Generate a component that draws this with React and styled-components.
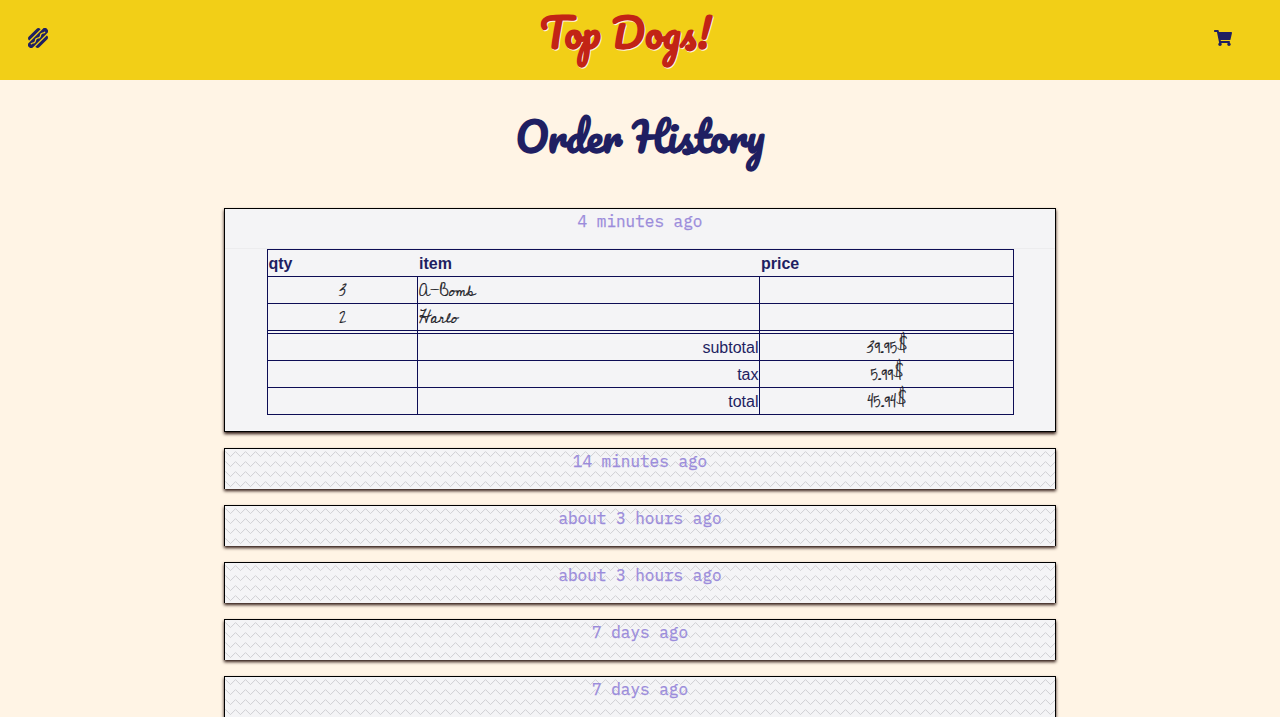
import React from "react";
import styled, { createGlobalStyle } from "styled-components";
import { FaHotdog, FaShoppingCart } from "react-icons/fa";

const zig = `url("data:image/svg+xml,%3Csvg xmlns='http://www.w3.org/2000/svg' width='10' height='10'%3E%3Cpath fill='none' stroke='%23c9c9cc' stroke-width='.85' d='M-4.5 7.6 .5 2.6l5 5 5-5 5 5'/%3E%3C/svg%3E")`;
const script = `"Pacifico", "Lato", cursive`;
const hand = `"Cedarville Cursive", "Lato", cursive`;
const mono = `"IBM Plex Mono", "Liberation Mono", monospace`;

const Global = createGlobalStyle`
  * { box-sizing: border-box; }
  body { margin: 0; background: #fff4e5; color: #1f1f62; overflow: hidden;
    font-family: "Liberation Sans", Arial, sans-serif; font-size: 16px; }
`;
const Header = styled.header`
  height: 80px; background: #f2cf17; display: flex; align-items: center;
  justify-content: space-between; padding: 0 48px 4px 28px;
  svg { display: block; }
`;
const Logo = styled.div`
  font: bold 40px/70px ${script}; color: #c22415; height: 70px; margin: 0 11px 12px 0;
  white-space: nowrap; text-shadow: 1px 1px 0 #fff4e4;
`;
const Title = styled.h1`
  font: bold 40px/70px ${script}; margin: 21px 0 37px; height: 70px; text-align: center;
`;
const List = styled.main`
  width: 832px; margin: 0 auto; display: flex; flex-direction: column; gap: 16px;
`;
const Card = styled.article`
  border: 1px solid #000; border-bottom-width: ${(p) => (p.$open ? 1 : 0)}px;
  height: ${(p) => (p.$open ? 224 : 41)}px; flex: none; background: #f4f4f6;
  box-shadow: 0 2px 3px #2d1712;
`;
const When = styled.div`
  height: 40px; text-align: center; color: #9b8cdb; font: 16px/25px ${mono};
  -webkit-text-stroke: 0.25px #9b8cdb;
  background: ${(p) => (p.$open ? "none" : zig)};
  border-bottom: ${(p) => (p.$open ? "1px solid #ececee" : "0")};
`;
const Table = styled.table`
  width: 747px; margin: 0 auto; border-collapse: collapse; table-layout: fixed; color: #1f1f62;
`;
const Col = styled.col`
  width: ${(p) => p.$w}px;
`;
const Th = styled.th`
  text-align: left; padding: 2px 1px 0 ${(p) => (p.$first ? 1 : 2)}px; height: 27px; line-height: 20px;
  border: 0 solid #0d0d55; border-top-width: 1px;
  border-left-width: ${(p) => (p.$first ? 1 : 0)}px; border-right-width: ${(p) => (p.$last ? 1 : 0)}px;
`;
const Td = styled.td`
  border: 1px solid #0d0d55; padding: ${(p) => (p.$align === "right" ? "2px 0 0" : "2px 0 0 1.5px")};
  line-height: 20px; text-align: ${(p) => p.$align || "left"};
`;
const Row = styled.tr`
  height: 27px;
`;
const Divider = styled.tr`
  height: 3px;
  ${Td} { padding: 0; line-height: 0; }
`;
const Ink = styled.span`
  display: block; font: 16px/20px ${hand}; height: 20px; color: #202026; white-space: nowrap;
  -webkit-text-stroke: 0.2px #202026;
`;

const items = [["3", "A-Bomb"], ["2", "Harlo"]];
const totals = [["subtotal", "39.95$"], ["tax", "5.99$"], ["total", "45.94$"]];
const orders = ["14 minutes ago", "about 3 hours ago", "about 3 hours ago", "7 days ago", "7 days ago"];

export default function App() {
  return (
    <>
      <Global />
      <Header>
        <FaHotdog size={20} color="#1f1f62" />
        <Logo>Top Dogs!</Logo>
        <FaShoppingCart size={18} color="#1f1f62" />
      </Header>
      <Title>Order History</Title>
      <List>
        <Card $open>
          <When $open>4 minutes ago</When>
          <Table>
            <colgroup><Col $w={150} /><Col $w={342} /><Col /></colgroup>
            <thead><tr><Th $first>qty</Th><Th>item</Th><Th $last>price</Th></tr></thead>
            <tbody>
              {items.map(([qty, name]) => (
                <Row key={name}><Td $align="center"><Ink>{qty}</Ink></Td><Td><Ink>{name}</Ink></Td><Td /></Row>
              ))}
              <Divider><Td /><Td /><Td /></Divider>
              {totals.map(([label, value]) => (
                <Row key={label}>
                  <Td /><Td $align="right">{label}</Td>
                  <Td $align="center"><Ink>{value}</Ink></Td>
                </Row>
              ))}
            </tbody>
          </Table>
        </Card>
        {orders.map((when, i) => <Card key={i}><When>{when}</When></Card>)}
      </List>
    </>
  );
}
